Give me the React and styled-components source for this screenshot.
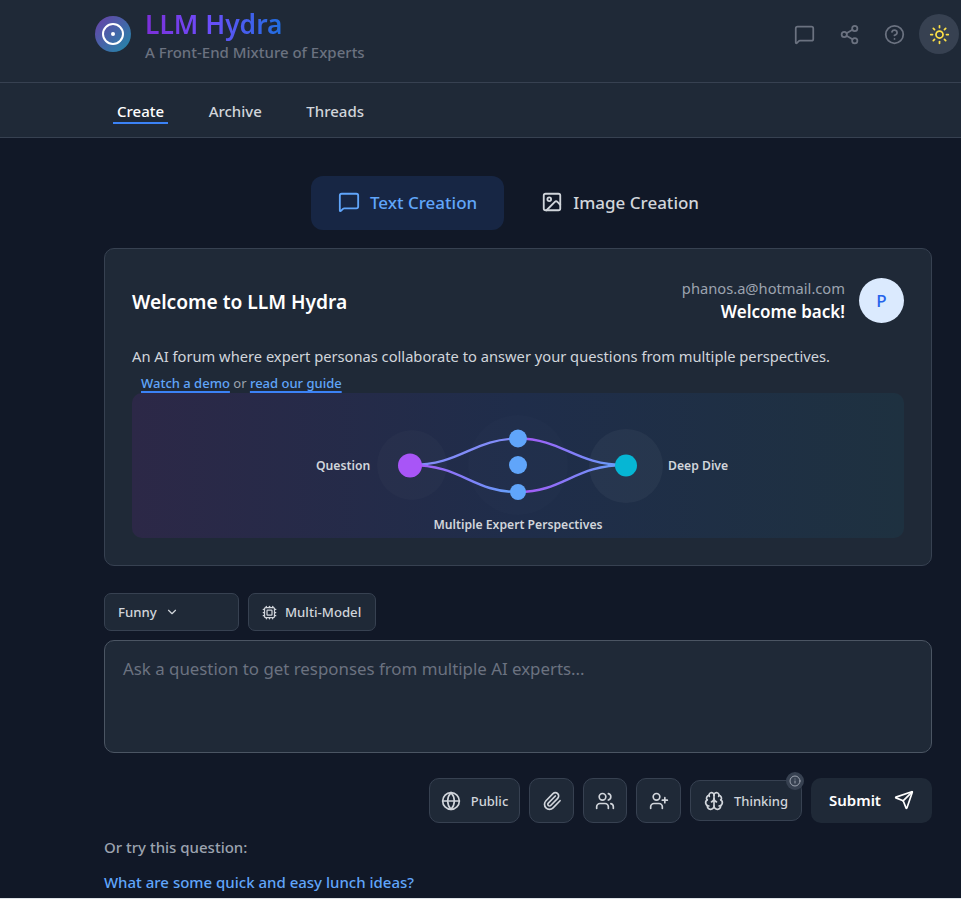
import React from 'react';
import styled, { createGlobalStyle } from 'styled-components';
import {
  Brain, ChevronDown, CircleHelp, Cpu, Globe, Image as ImageIcon, Info, MessageSquare,
  Paperclip, Send, Share2, Sun, UserPlus, Users,
} from 'lucide-react';

const GlobalStyle = createGlobalStyle`
  html, body {
    margin: 0;
    padding: 0;
    background: #dfe3e8;
  }
  body {
    font-family: "Noto Sans", "Open Sans", sans-serif;
    overflow: hidden;
  }
  * {
    box-sizing: border-box;
  }
`;

const Page = styled.div`
  height: 898px;
  overflow: hidden;
  background: #111827;
`;

const Header = styled.header`
  height: 83px;
  padding: 0 2px 0 95px;
  display: flex;
  justify-content: space-between;
  background: #1f2937;
  border-bottom: 1px solid #374151;
`;

const Brand = styled.div`
  display: flex;
  align-items: flex-start;
  gap: 14px;
  padding-top: 16px;
`;

const Logo = styled.div`
  width: 36px;
  height: 36px;
  border-radius: 50%;
  display: flex;
  align-items: center;
  justify-content: center;
  background: linear-gradient(135deg, #6b3fa8, #1f8aa8);
  color: #fff;
`;

const BrandText = styled.div`
  margin-top: -9px;
  display: flex;
  flex-direction: column;
`;

const Title = styled.h1`
  margin: 0;
  align-self: flex-start;
  font-size: 26.4px;
  line-height: 35px;
  font-weight: 600;
  background: linear-gradient(90deg, #7c2fd8, #6d4dfb 45%, #1f6fe0);
  -webkit-background-clip: text;
  background-clip: text;
  color: transparent;
`;

const Tagline = styled.p`
  margin: 0;
  font-size: 15px;
  line-height: 20px;
  font-weight: 500;
  color: #6b7280;
`;

const HeaderIcons = styled.div`
  display: flex;
  align-items: center;
  gap: 5px;
  height: 68px;
`;

const HeaderIcon = styled.button`
  width: 40px;
  height: 40px;
  padding: 0;
  border: 0;
  border-radius: 50%;
  display: flex;
  align-items: center;
  justify-content: center;
  color: ${(p) => (p.$active ? '#fde047' : '#6b7280')};
  background: ${(p) => (p.$active ? '#374151' : 'transparent')};
`;

const Nav = styled.nav`
  height: 55px;
  padding: 0 0 0 113px;
  display: flex;
  align-items: center;
  gap: 36.5px;
  background: #1f2937;
  border-bottom: 1px solid #374151;
`;

const NavItem = styled.a`
  padding: 4px 4px 0;
  font-size: 15px;
  line-height: 22px;
  font-weight: 500;
  color: ${(p) => (p.$active ? '#fff' : '#d1d5db')};
  border-bottom: 2px solid ${(p) => (p.$active ? '#3b82f6' : 'transparent')};
`;

const Main = styled.main`
  width: 828px;
  margin-left: 104px;
  padding-top: 38px;
`;

const Tabs = styled.div`
  display: flex;
  justify-content: center;
  gap: 10px;
  padding-left: 1px;
`;

const Tab = styled.button`
  height: 54px;
  padding: 0 27px 2px;
  border: 0;
  border-radius: 12px;
  display: flex;
  align-items: center;
  gap: 10px;
  font-family: inherit;
  font-size: 17px;
  font-weight: 500;
  color: ${(p) => (p.$active ? '#60a5fa' : '#d1d5db')};
  background: ${(p) => (p.$active ? '#172644' : 'transparent')};
`;

const Card = styled.section`
  margin-top: 18px;
  height: 318px;
  padding: 29px 27px 0;
  background: #1f2937;
  border: 1px solid #374151;
  border-radius: 10px;
`;

const CardTop = styled.div`
  display: flex;
  align-items: center;
  justify-content: space-between;
`;

const CardTitle = styled.h2`
  margin: 0;
  font-size: 19.2px;
  font-weight: 600;
  color: #fff;
`;

const User = styled.div`
  display: flex;
  align-items: flex-start;
  gap: 14px;
`;

const UserText = styled.div`
  text-align: right;
`;

const Email = styled.div`
  font-size: 14.7px;
  line-height: 20px;
  color: #9ca3af;
`;

const WelcomeBack = styled.div`
  font-size: 17px;
  line-height: 27px;
  font-weight: 600;
  color: #fff;
`;

const Avatar = styled.div`
  width: 45px;
  height: 45px;
  border-radius: 50%;
  display: flex;
  align-items: center;
  justify-content: center;
  font-size: 17px;
  font-weight: 500;
  color: #2563eb;
  background: #dbeafe;
`;

const Intro = styled.p`
  margin: 21px 0 0;
  font-size: 14.7px;
  line-height: 21px;
  color: #d1d5db;
`;

const Links = styled.div`
  margin-top: 8px;
  padding-left: 9px;
  font-size: 13px;
  line-height: 17px;
  color: #9ca3af;
`;

const DocLink = styled.a`
  font-weight: 500;
  color: #60a5fa;
  text-decoration: underline;
  text-decoration-color: #3b82f6;
  text-decoration-thickness: 1.5px;
  text-underline-offset: 3px;
`;

const Diagram = styled.div`
  margin-top: 1px;
  height: 145px;
  border-radius: 10px;
  overflow: hidden;
  background: linear-gradient(90deg, #2c2847, #1f2d4a 50%, #1e3140);
`;

const DiagramSvg = styled.svg`
  display: block;
  width: 772px;
  height: 145px;
`;

const DiagramLabel = styled.text`
  font-size: 12.2px;
  font-weight: 600;
  fill: #d1d5db;
`;

const Controls = styled.div`
  margin-top: 27px;
  display: flex;
  gap: 9px;
`;

const Control = styled.button`
  height: 38px;
  width: ${(p) => p.$width};
  padding: 0 13px;
  border: 1px solid #374151;
  border-radius: 7px;
  display: flex;
  align-items: center;
  gap: 8px;
  font-family: inherit;
  font-size: 13.2px;
  font-weight: 500;
  color: #d1d5db;
  background: #1f2937;
`;

const Prompt = styled.textarea`
  display: block;
  width: 100%;
  height: 113px;
  margin-top: 9px;
  padding: 16px 18px;
  border: 1px solid #4b5563;
  border-radius: 10px;
  resize: none;
  outline: none;
  font-family: inherit;
  font-size: 16.85px;
  line-height: 24px;
  color: #d1d5db;
  background: #1f2937;
  &::placeholder {
    color: #6b7280;
  }
`;

const Actions = styled.div`
  margin-top: 25px;
  display: flex;
  justify-content: flex-end;
  align-items: center;
  gap: 9px;
`;

const ActionButton = styled.button`
  position: relative;
  height: ${(p) => p.$height || '45px'};
  width: ${(p) => p.$width || '45px'};
  padding: 0;
  border: 1px solid #374151;
  border-radius: 10px;
  display: flex;
  align-items: center;
  justify-content: center;
  gap: 10px;
  font-family: inherit;
  font-size: 13px;
  font-weight: 500;
  color: #d1d5db;
  background: #1f2937;
`;

const InfoBadge = styled.span`
  position: absolute;
  top: -9px;
  right: -3px;
  width: 18px;
  height: 18px;
  border-radius: 50%;
  display: flex;
  align-items: center;
  justify-content: center;
  color: #9ca3af;
  background: #374151;
`;

const SubmitButton = styled.button`
  height: 45px;
  width: 121px;
  padding: 0 0 2px;
  border: 0;
  border-radius: 10px;
  display: flex;
  align-items: center;
  justify-content: center;
  gap: 13px;
  font-family: inherit;
  font-size: 15px;
  font-weight: 600;
  color: #fff;
  background: #1f2937;
`;

const TryLabel = styled.p`
  margin: 14px 0 0;
  font-size: 15px;
  line-height: 21px;
  font-weight: 500;
  color: #9ca3af;
`;

const TryQuestion = styled.a`
  display: block;
  margin-top: 14px;
  font-size: 15px;
  line-height: 21px;
  font-weight: 500;
  color: #60a5fa;
`;

function FlowDiagram() {
  return (
    <DiagramSvg viewBox="0 0 772 145">
      <defs>
        <linearGradient id="flowOut" x1="0" x2="1" y1="0" y2="0">
          <stop offset="0" stopColor="#a855f7" />
          <stop offset="1" stopColor="#60a5fa" />
        </linearGradient>
      </defs>
      <circle cx="386" cy="72" r="50" fill="#fff" fillOpacity="0.01" />
      <circle cx="280" cy="72" r="35" fill="#fff" fillOpacity="0.02" />
      <circle cx="494" cy="73" r="37" fill="#fff" fillOpacity="0.04" />
      <g fill="none" strokeWidth="2.4">
        <path d="M278 72 C330 72 340 46 386 45.5" stroke="#818cf8" />
        <path d="M278 72 C330 72 340 99 386 99" stroke="url(#flowOut)" />
        <path d="M386 45.5 C432 46 442 72 494 72" stroke="url(#flowOut)" />
        <path d="M386 99 C432 99 442 72 494 72" stroke="url(#flowOut)" />
      </g>
      <circle cx="278" cy="72.5" r="12" fill="#a855f7" />
      <circle cx="386" cy="45.5" r="9" fill="#60a5fa" />
      <circle cx="386" cy="72" r="9" fill="#60a5fa" />
      <circle cx="386" cy="99" r="8" fill="#60a5fa" />
      <circle cx="494" cy="72.5" r="11" fill="#06b6d4" />
      <DiagramLabel x="184" y="77">Question</DiagramLabel>
      <DiagramLabel x="536" y="77">Deep Dive</DiagramLabel>
      <DiagramLabel x="386" y="135.5" textAnchor="middle">Multiple Expert Perspectives</DiagramLabel>
    </DiagramSvg>
  );
}

export default function App() {
  return (
    <Page>
      <GlobalStyle />
      <Header>
        <Brand>
          <Logo>
            <svg width="24" height="24" viewBox="0 0 24 24" fill="none">
              <circle cx="12" cy="12" r="10" stroke="currentColor" strokeWidth="2" />
              <circle cx="12" cy="12" r="2" fill="currentColor" />
            </svg>
          </Logo>
          <BrandText>
            <Title>LLM Hydra</Title>
            <Tagline>A Front-End Mixture of Experts</Tagline>
          </BrandText>
        </Brand>
        <HeaderIcons>
          <HeaderIcon><MessageSquare size={21} /></HeaderIcon>
          <HeaderIcon><Share2 size={21} /></HeaderIcon>
          <HeaderIcon><CircleHelp size={21} /></HeaderIcon>
          <HeaderIcon $active><Sun size={21} /></HeaderIcon>
        </HeaderIcons>
      </Header>
      <Nav>
        <NavItem $active>Create</NavItem>
        <NavItem>Archive</NavItem>
        <NavItem>Threads</NavItem>
      </Nav>
      <Main>
        <Tabs>
          <Tab $active><MessageSquare size={22} />Text Creation</Tab>
          <Tab><ImageIcon size={22} />Image Creation</Tab>
        </Tabs>
        <Card>
          <CardTop>
            <CardTitle>Welcome to LLM Hydra</CardTitle>
            <User>
              <UserText>
                <Email>phanos.a@hotmail.com</Email>
                <WelcomeBack>Welcome back!</WelcomeBack>
              </UserText>
              <Avatar>P</Avatar>
            </User>
          </CardTop>
          <Intro>An AI forum where expert personas collaborate to answer your questions from multiple perspectives.</Intro>
          <Links>
            <DocLink>Watch a demo</DocLink> or <DocLink>read our guide</DocLink>
          </Links>
          <Diagram><FlowDiagram /></Diagram>
        </Card>
        <Controls>
          <Control $width="135px">Funny <ChevronDown size={14} /></Control>
          <Control $width="128px"><Cpu size={15} />Multi-Model</Control>
        </Controls>
        <Prompt placeholder="Ask a question to get responses from multiple AI experts..." />
        <Actions>
          <ActionButton $width="91px"><Globe size={20} />Public</ActionButton>
          <ActionButton><Paperclip size={20} /></ActionButton>
          <ActionButton $width="44px"><Users size={20} /></ActionButton>
          <ActionButton><UserPlus size={20} /></ActionButton>
          <ActionButton $width="112px" $height="41px">
            <Brain size={20} />Thinking
            <InfoBadge><Info size={12} /></InfoBadge>
          </ActionButton>
          <SubmitButton>Submit <Send size={20} /></SubmitButton>
        </Actions>
        <TryLabel>Or try this question:</TryLabel>
        <TryQuestion>What are some quick and easy lunch ideas?</TryQuestion>
      </Main>
    </Page>
  );
}
